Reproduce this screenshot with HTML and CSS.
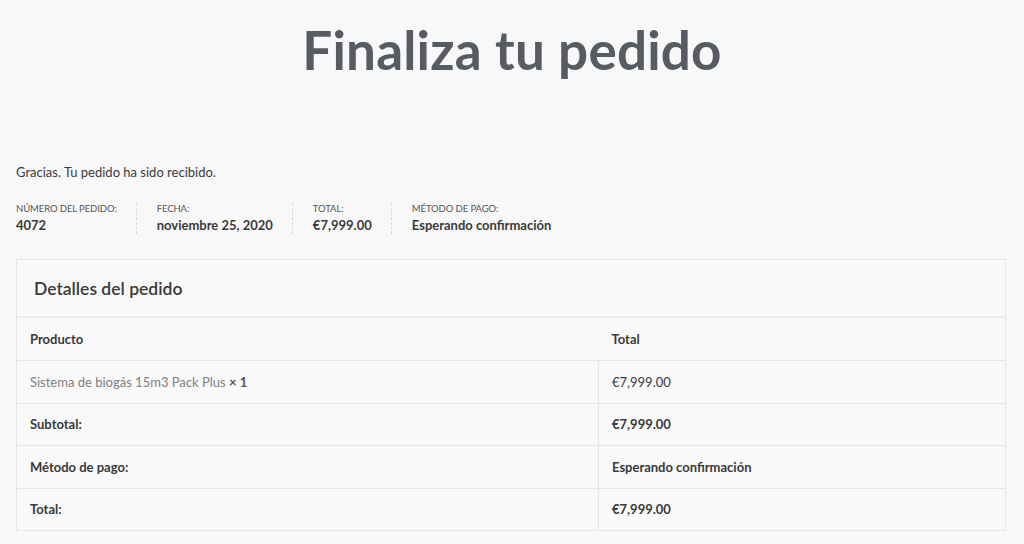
FILE: index.html
```html
<!DOCTYPE html>
<html lang="es">
<head>
<meta charset="utf-8">
<title>Finaliza tu pedido</title>
<link rel="stylesheet" href="styles.css">
</head>
<body>
<header class="page-header">
  <h1 class="page-title">Finaliza tu pedido</h1>
</header>
<main class="content">
  <p class="thanks">Gracias. Tu pedido ha sido recibido.</p>
  <ul class="overview">
    <li class="ov-item"><span class="ov-label">Número del pedido:</span><strong class="ov-value">4072</strong></li>
    <li class="ov-item"><span class="ov-label">Fecha:</span><strong class="ov-value">noviembre 25, 2020</strong></li>
    <li class="ov-item"><span class="ov-label">Total:</span><strong class="ov-value">€7,999.00</strong></li>
    <li class="ov-item last"><span class="ov-label">Método de pago:</span><strong class="ov-value">Esperando confirmación</strong></li>
  </ul>
  <section class="details">
    <h2 class="details-title">Detalles del pedido</h2>
    <table class="order-table">
      <thead>
        <tr><th class="c1 head">Producto</th><th class="c2 head">Total</th></tr>
      </thead>
      <tbody>
        <tr><td class="c1 product">Sistema de biogás 15m3 Pack Plus <strong class="qty">× 1</strong></td><td class="c2">€7,999.00</td></tr>
      </tbody>
      <tfoot>
        <tr><th class="c1">Subtotal:</th><td class="c2 bold">€7,999.00</td></tr>
        <tr><th class="c1">Método de pago:</th><td class="c2 bold">Esperando confirmación</td></tr>
        <tr><th class="c1">Total:</th><td class="c2 bold">€7,999.00</td></tr>
      </tfoot>
    </table>
  </section>
</main>
</body>
</html>
```
FILE: styles.css
```css
html, body {
  margin: 0;
  padding: 0;
  background: #f8f8f8;
}
body {
  font-family: Lato, "Open Sans", "Liberation Sans", sans-serif;
  color: #3a3a3a;
  font-size: 13px;
}
.page-header {
  height: 98px;
  display: flex;
  align-items: center;
  justify-content: center;
}
.page-title {
  margin: 0;
  font-size: 53px;
  font-weight: 700;
  color: #575b62;
  line-height: 1;
  letter-spacing: 0.2px;
}
.content {
  width: 990px;
  margin: 0 0 0 16px;
  padding-top: 65px;
}
.thanks {
  margin: 0;
  font-size: 13px;
  line-height: 18px;
  color: #3a3a3a;
}
.overview {
  list-style: none;
  margin: 22px 0 0;
  padding: 0;
  display: flex;
}
.ov-item {
  display: flex;
  flex-direction: column;
  padding-right: 19px;
  margin-right: 20px;
  border-right: 1px dashed #d8d8d8;
}
.ov-item.last {
  border-right: none;
}
.ov-label {
  font-size: 9.5px;
  text-transform: uppercase;
  color: #555;
  line-height: 12px;
  letter-spacing: -0.1px;
}
.ov-value {
  font-size: 13px;
  font-weight: 700;
  color: #3a3a3a;
  line-height: 18px;
  margin-top: 1px;
}
.details {
  margin-top: 25px;
  border: 1px solid #e6e6e6;
  background: #f9f9f9;
}
.details-title {
  margin: 0;
  height: 56px;
  display: flex;
  align-items: center;
  padding-left: 17px;
  font-size: 17.5px;
  font-weight: 600;
  color: #3a3a3a;
  border-bottom: 2px solid #ececec;
}
.order-table {
  width: 100%;
  border-collapse: collapse;
}
.order-table th,
.order-table td {
  text-align: left;
  padding: 0 13px;
  height: 41.5px;
  font-size: 13px;
  border-top: 1px solid #e6e6e6;
}
.order-table th {
  font-weight: 700;
}
.order-table thead th {
  border-top: none;
  height: 42px;
}
.c1 {
  width: 555px;
}
.order-table tbody .c2,
.order-table tfoot .c2 {
  border-left: 1px solid #e6e6e6;
}
.product {
  color: #808080;
}
.qty {
  color: #555;
  font-weight: 700;
}
.bold {
  font-weight: 700;
}
```
